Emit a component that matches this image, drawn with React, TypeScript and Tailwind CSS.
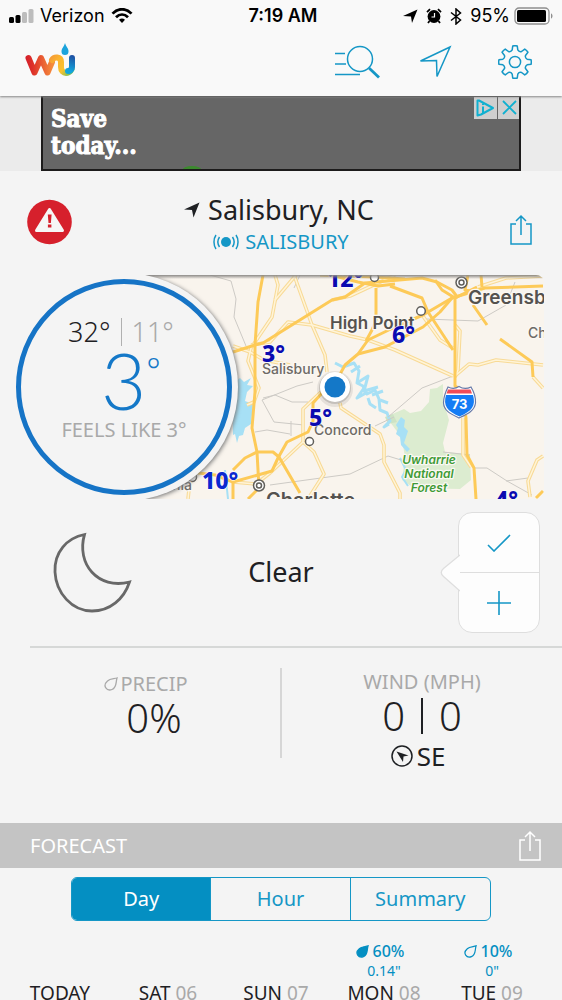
import React from "react";

const gearPath = (() => {
  const pt = (r: number, deg: number) => {
    const a = (deg * Math.PI) / 180;
    return `${(17 + r * Math.cos(a)).toFixed(2)} ${(17 + r * Math.sin(a)).toFixed(2)}`;
  };
  let d = "";
  for (let k = 0; k < 8; k++) {
    const a = k * 45 - 90;
    d += `${k === 0 ? "M" : "L"}${pt(12.4, a - 13)} L${pt(16.2, a - 8)} Q${pt(16.6, a)} ${pt(16.2, a + 8)} L${pt(12.4, a + 13)} Q${pt(10.6, a + 22.5)} ${pt(12.4, a + 32)} `;
  }
  return d + "Z";
})();

function StatusBar() {
  return (
    <div className="grid h-8 grid-cols-3 items-center pl-2 pr-2 font-['Inter',sans-serif] text-lg text-black">
      <div className="flex items-center gap-1.5">
        <svg width="26" height="16" viewBox="0 0 26 16" aria-label="Signal">
          <rect x="1" y="9" width="5" height="6" rx="1.5" fill="#000" />
          <rect x="7.500" y="7" width="5" height="8" rx="1.500" fill="#000" />
          <rect x="14" y="4" width="5" height="11" rx="1.500" fill="#bdbdbd" />
          <rect x="20.500" y="1" width="5" height="14" rx="1.500" fill="#bdbdbd" />
        </svg>
        <span>Verizon</span>
        <svg width="22" height="16" viewBox="0 0 22 16" fill="none" stroke="#000" strokeWidth="2.800" aria-label="Wi-Fi">
          <path d="M1.500 5.600C7-.2 15-.2 20.500 5.600" />
          <path d="M5 9.300c3.600-3.500 8.400-3.500 12 0" />
          <path d="M8 11.800c2-1.600 4-1.600 6 0L11 15Z" fill="#000" stroke="none" />
        </svg>
      </div>
      <span className="pl-1 text-center font-semibold">7:19 AM</span>
      <div className="flex items-center justify-end gap-2">
        <svg width="15" height="15" viewBox="0 0 15 15" aria-label="Location">
          <path d="M14.500.5 9 14 8 7.400 0 7Z" fill="#000" />
        </svg>
        <svg width="16" height="16" viewBox="0 0 16 16" aria-label="Alarm">
          <circle cx="8" cy="8.500" r="6.400" fill="#000" />
          <path d="M1 4.200 4 1.200M15 4.200 12 1.200M3.500 13 2 15M12.500 13 14 15" stroke="#000" strokeWidth="1.800" />
          <path d="M8.500 5v4H5.500" stroke="#fff" strokeWidth="1.200" fill="none" />
        </svg>
        <svg width="12" height="17" viewBox="0 0 12 17" fill="none" stroke="#000" strokeWidth="1.500" aria-label="Bluetooth">
          <path d="M1 4.500 10.500 12 6 16V1l4.500 4L1 12.500" />
        </svg>
        <span>95%</span>
        <svg width="40" height="18" viewBox="0 0 40 18" className="-ml-1" aria-label="Battery">
          <rect x="1" y="1" width="34" height="16" rx="4" fill="none" stroke="#8f8f8f" strokeWidth="1.300" />
          <rect x="3" y="3" width="29" height="12" rx="1.500" fill="#000" />
          <path d="M37 6.500c2 .6 2 4.400 0 5Z" fill="#8f8f8f" />
        </svg>
      </div>
    </div>
  );
}

function Logo() {
  return (
    <svg width="52" height="36" viewBox="0 0 52 36" aria-label="WU">
      <defs>
        <linearGradient id="w" gradientUnits="userSpaceOnUse" x1="2" y1="0" x2="28" y2="0">
          <stop offset="0" stopColor="#d4202c" />
          <stop offset=".25" stopColor="#dd3029" />
          <stop offset="1" stopColor="#f58a3c" />
        </linearGradient>
        <linearGradient id="y" gradientUnits="userSpaceOnUse" x1="26" y1="14" x2="48" y2="30">
          <stop offset="0" stopColor="#f59a37" />
          <stop offset=".3" stopColor="#fbb42f" />
          <stop offset=".65" stopColor="#f9c22f" />
          <stop offset="1" stopColor="#6fbf5a" />
        </linearGradient>
        <linearGradient id="b" gradientUnits="userSpaceOnUse" x1="48" y1="12" x2="43" y2="28">
          <stop offset="0" stopColor="#1f4ea1" />
          <stop offset=".95" stopColor="#12a5dc" />
        </linearGradient>
      </defs>
      <g fill="none" strokeWidth="6" strokeLinecap="round" strokeLinejoin="round">
        <path d="M4.500 15 10.500 29.500 17 15 23.500 29.500 28 19" stroke="url(#w)" />
        <path d="M28 17c2-3.500 9-4 9 2v5c0 4 2.500 6 5 6 4 0 6-3 6-7" stroke="url(#y)" />
        <path d="M48 15v9c0 2.500-2 4-4 4" stroke="url(#b)" />
      </g>
      <path d="M41 0c1 4 3.500 5 3.500 8.500a3.500 3.500 0 0 1-7 0C37.500 5 40 4 41 0Z" fill="#1ba3dc" />
    </svg>
  );
}

function TopNav() {
  return (
    <div className="flex h-16 items-start justify-between pt-[11px] pl-6 pr-[30px]">
      <a href="#home" aria-label="Home">
        <Logo />
      </a>
      <div className="flex items-center gap-9 pt-0.5 text-[#1597c6]">
        <button aria-label="Search">
          <svg width="50" height="34" viewBox="0 0 50 34" fill="none" stroke="currentColor" strokeWidth="1.500">
            <circle cx="28" cy="14" r="12.500" />
            <path d="M3 8.500h10M3 19h11M3 29.500h25" />
            <path d="m37 23 10 9.500" strokeWidth="2.800" />
          </svg>
        </button>
        <button aria-label="My location">
          <svg width="34" height="34" viewBox="0 0 34 34" fill="none" stroke="currentColor" strokeWidth="1.500">
            <path d="M32 2 2.500 16 18.500 15.500 19 31.500Z" />
          </svg>
        </button>
        <button aria-label="Settings" className="ml-2.5">
          <svg width="34" height="34" viewBox="0 0 34 34" fill="none" stroke="currentColor" strokeWidth="1.500" strokeLinejoin="round">
            <path d={gearPath} />
            <circle cx="17" cy="17" r="5.600" />
          </svg>
        </button>
      </div>
    </div>
  );
}

function Ad() {
  return (
    <aside className="flex justify-center bg-[#ebebeb]">
      <div className="flex h-[75px] w-[480px] max-w-full justify-between overflow-hidden border-2 border-t border-[#1c1b1b] bg-[#666]">
        <p className="pl-2 pt-2 font-['DejaVu_Serif_Condensed','DejaVu_Serif',serif] text-2xl leading-[27px] font-bold text-white [-webkit-text-stroke:1px_white]">
          Save
          <br />
          today...
        </p>
        <svg width="22" height="4" viewBox="0 0 22 4" className="mr-auto ml-11 self-end">
          <ellipse cx="11" cy="4" rx="9" ry="3" fill="#3c8a2e" />
        </svg>
        <div className="-mr-0.5 flex h-[22px] gap-px text-[#10b0d0]">
          <button aria-label="Ad choices" className="bg-[#cfcfcf]">
            <svg width="23" height="22" viewBox="0 0 23 22" fill="none" stroke="currentColor" strokeWidth="2">
              <path d="M3.500 3.500v15l3.500-1 12-6.500L5 3.500Z" strokeLinejoin="round" />
              <path d="M9 9.500v7M9 6.500v1.500" />
            </svg>
          </button>
          <button aria-label="Close ad" className="bg-[#cfcfcf]">
            <svg width="23" height="22" viewBox="0 0 23 22" fill="none" stroke="currentColor" strokeWidth="1.800">
              <path d="m5 4 13 13M18 4 5 17" />
            </svg>
          </button>
        </div>
      </div>
    </aside>
  );
}

function ShareIcon() {
  return (
    <svg width="24" height="32" viewBox="0 0 24 32" fill="none" stroke="currentColor" strokeWidth="1.500">
      <path d="M7 10H2v20h20V10h-5M12 21V2.500M7 7l5-5 5 5" />
    </svg>
  );
}

function Place() {
  return (
    <section className="grid h-[104px] grid-cols-[60px_1fr_60px] items-start px-[27px] pt-[21px]">
      <button aria-label="Severe alert" className="mt-[7px] w-fit">
        <svg width="45" height="46" viewBox="0 0 45 46">
          <circle cx="22.500" cy="23" r="22.300" fill="#d6202c" />
          <path d="M22.500 10.500 35.500 31.500h-26Z" fill="#f6f6f6" stroke="#f6f6f6" strokeWidth="3" strokeLinejoin="round" />
          <path d="M20.800 15.500h3.800l-.7 8.500h-2.400ZM20.900 25.500h3.500V28.500h-3.500Z" fill="#d6202c" />
        </svg>
      </button>
      <div className="flex flex-col items-center">
        <h1 className="flex items-center gap-2 pr-1 text-[27px] leading-9 whitespace-nowrap text-[#1e2023]">
          <svg width="16" height="16" viewBox="0 0 16 16">
            <path d="M15.500.5 9.500 15.500 8 8 0 7.500Z" fill="currentColor" />
          </svg>
          Salisbury, NC
        </h1>
        <a href="#station" className="flex items-center gap-1.5 text-xl leading-7 text-[#1597c6]">
          <svg width="26" height="16" viewBox="0 0 26 16" fill="none" stroke="currentColor" strokeWidth="1.500">
            <circle cx="13" cy="8" r="5" fill="currentColor" stroke="none" />
            <path d="M6.500 3c-2 3-2 7 0 10M3 1C.3 5 .3 11 3 15M19.500 3c2 3 2 7 0 10M23 1c2.700 4 2.700 10 0 14" />
          </svg>
          SALISBURY
        </a>
      </div>
      <button aria-label="Share conditions" className="mt-[22px] mr-0.5 justify-self-end text-[#1597c6]">
        <ShareIcon />
      </button>
    </section>
  );
}

const minorRoads = [
  "M275 275 278 285 272 317 251 348 248 361 259 388 254 402 247 405",
  "M294 275 312 325 325 355 327 372",
  "M251 345 270 342 288 322 312 325 350 336 368 340 395 350 453 376",
  "M233 346 250 352 264 360 290 365",
  "M321 392 303 409 303 442 314 452 324 474 308 499",
  "M303 442 270 473 256 484 233 482",
  "M340 403 341 408 380 434 384 445 384 462 400 493 400 499",
  "M296 275 275 300",
  "M455 376 469 364 478 365 496 360 543 365",
  "M455 325 460 331 458 370 455 377",
  "M533 377 543 388",
  "M463 418 463 455 471 467",
  "M543 456 537 460 528 481 530 497",
  "M395 275 350 296 332 300",
  "M420 312 440 340 453 348",
  "M478 287 506 278 543 276",
  "M190 480 188 499",
];

const majorRoads = [
  "M263 275 258 302 255 345 255 392 252 428 257 452 259 488 248 499",
  "M233 352 255 345 263 343 332 300 345 297 365 283 422 278 437 282 452 290 458 298",
  "M327 274 358 282 378 286 395 284",
  "M320 275 375 277 405 279",
  "M390 286 422 298 428 312 453 350",
  "M435 280 442 290 455 298 477 287",
  "M233 482 272 471 278 458 287 442 308 432 313 421 313 403 322 393 338 378 345 365 358 354 368 340 395 327 423 315 452 298 485 288 543 286",
  "M358 354 385 347 423 327 440 312 452 298",
  "M376 288 376 320 372 330 366 341",
  "M455 298 455 340 455 386 462 390 466 418 467 455 474 468 476 499",
  "M473 305 487 325M500 339 532 362 533 377",
  "M233 470 245 458 257 452 273 452 279 457 300 493",
  "M233 482 233 499",
  "M468 275 465 290 481 293",
  "M481 275 482 287",
  "M190 472 215 475 233 482",
  "M536 498 543 491",
];

function MapView() {
  return (
    <a
      href="#map"
      aria-label="Open map"
      className="relative col-start-1 row-start-1 ml-[108px] block h-56 overflow-hidden rounded-r-lg bg-[#f9f4ed]"
    >
      <svg className="h-full w-full" viewBox="124 275 420 224" preserveAspectRatio="xMinYMin slice">
        <path
          d="M443 384 437 388 430 389 429 402 421 411 410 413 404 409 390 415 390 422 402 438 405 458 402 480 414 488 460 489 471 480 470 454 445 452 443 443 449 420 443 400Z"
          fill="#dcecd0"
        />
        <path d="M385 417 393 414 397 422 388 424Z" fill="#cde3c4" />
        <g fill="#a7e0f5">
          <path d="m240 378 4 4 7-4-4 7 6 1-6 6-2 9 8 3-2 20-6 4-2 7-4 1-2 7-2-9-2 1-1-40 4-4-3-8Z" />
          <path d="m396 425 5-8 4 3-1 7 4 4-4 12 6 6-3 3-6-7-1-8-4-3 2-6Z" />
        </g>
        <g fill="none" stroke="#a7e0f5" strokeWidth="2" strokeLinejoin="round">
          <path d="m335 363 8 4 11-4 5 8-2 12 6 3 4 8 8-4 4 9 1 11 7 3 3 8-6 6 5-3" strokeWidth="3" />
          <path d="M351 372 360 366M357 383 368 376 364 391 378 387M366 393 357 398 364 388M372 395 383 391M376 408 370 404 368 398M380 400 388 403" strokeWidth="3" />
          <path d="M400 458 406 470 402 477 408 486M225 470 228 499" />
        </g>
        <g fill="none" stroke="#cdcac5" strokeWidth="1">
          <path d="M210 275 231 281 236 299 234 317 246 346M313 382 297 386 262 400 274 422 304 425M263 398 275 395 292 402 308 402M255 432 267 430 290 434M291 421V436" />
          <path d="M270 485 350 474 388 456 401 460M375 426 394 417M388 417 422 388 453 376M426 319 478 321 506 305 515 282M300 275 294 288M474 468 487 468 507 481 532 495M506 481 528 478M443 452 470 455" />
        </g>
        <g fill="none" stroke="#f8da96" strokeWidth="3.600" strokeLinejoin="round">
          {minorRoads.map((d) => (
            <path key={d} d={d} />
          ))}
        </g>
        <g fill="none" stroke="#fff4d8" strokeWidth="1.500" strokeLinejoin="round">
          {minorRoads.map((d) => (
            <path key={d} d={d} />
          ))}
        </g>
        <g fill="none" stroke="#fdca58" strokeWidth="3" strokeLinejoin="round">
          {majorRoads.map((d) => (
            <path key={d} d={d} />
          ))}
        </g>
        <g fill="#fff" stroke="#615f5b" strokeWidth="1.500">
          <circle cx="374.500" cy="277.500" r="4" />
          <circle cx="421" cy="311" r="4.300" />
          <circle cx="309.500" cy="441.500" r="4" />
          <circle cx="461.500" cy="282.500" r="5.500" />
          <circle cx="461.500" cy="282.500" r="2.500" />
          <circle cx="259" cy="485.500" r="5.500" />
          <circle cx="259" cy="485.500" r="2.500" />
          <circle cx="192" cy="477" r="4.500" />
        </g>
        <g
          className="font-['Inter',sans-serif]"
          fill="#6e6a66"
          stroke="#fbf8f3"
          strokeWidth="2.500"
          strokeLinejoin="round"
          paintOrder="stroke"
          fontSize="14"
          fontWeight="500"
        >
          <text x="262" y="374">Salisbury</text>
          <text x="314" y="435">Concord</text>
          <text x="528" y="338">Ch</text>
          <text x="172" y="490">nia</text>
          <g fill="#55524f" fontWeight="600">
            <text x="330" y="329" fontSize="17">High Point</text>
            <text x="468" y="304" fontSize="19">Greensb</text>
            <text x="266" y="507" fontSize="20">Charlotte</text>
          </g>
          <g fill="#3f9b36" fontStyle="italic" fontWeight="600" fontSize="12" textAnchor="middle">
            <text x="429" y="464">Uwharrie</text>
            <text x="429" y="478">National</text>
            <text x="429" y="492">Forest</text>
          </g>
        </g>
        <path
          d="M448 387c4 2 7 2 11-.5 4 2.500 8 2.500 12 .5 3 5 5 9 4.500 16-1 8-8 11-16.500 15-8-4-15-7-15.500-15 0-7 2-11 4.500-16Z"
          fill="#fff"
          stroke="#6779a8"
          strokeWidth="1.200"
        />
        <path d="M448 389.500h22.500l1.500 4h-25.500Z" fill="#f14b58" />
        <path d="M446 395h27c3 11-1 16-13.500 21.500C447 411 443 406 446 395Z" fill="#147cf5" />
        <text x="459.500" y="409" textAnchor="middle" fill="#fff" fontSize="13" fontWeight="700" className="font-['Inter',sans-serif]">
          73
        </text>
        <g fill="#0a0ab0" fontSize="23" fontWeight="800" stroke="#fff" strokeWidth="1" paintOrder="stroke" className="font-['Noto_Sans',sans-serif]">
          <text x="327" y="287">12°</text>
          <text x="262" y="362">3°</text>
          <text x="392" y="343">6°</text>
          <text x="309" y="426">5°</text>
          <text x="202" y="489" fill="#0a28d0">10°</text>
          <text x="495" y="508">4°</text>
        </g>
        <circle cx="335" cy="389" r="18" fill="#000" opacity=".08" />
        <circle cx="335" cy="388" r="16" fill="#000" opacity=".14" />
        <circle cx="335" cy="387" r="15" fill="#fff" />
        <circle cx="335" cy="387" r="10.500" fill="#1478c8" />
      </svg>
      <div className="absolute inset-x-0 top-0 h-1 bg-linear-to-b from-[#8c8a87] to-transparent" />
      <div className="absolute top-1/2 left-0 size-[228px] -translate-1/2 rounded-full bg-[#f4f4f4] shadow-[1px_1px_4px_#777]" />
    </a>
  );
}

function Current() {
  return (
    <section className="grid items-center pl-4 pr-[18px]">
      <MapView />
      <div className="z-10 col-start-1 row-start-1 flex size-[216px] flex-col items-center rounded-full border-[5px] border-[#1674c6] bg-[#f4f4f4] pt-[30px]">
        <div className="flex items-center gap-2.5 pr-1.5 text-[27px] leading-9">
          <span className="font-light text-[#1e2023]">32°</span>
          <span className="h-7 w-px bg-[#b0b0b0]" />
          <span className="font-light text-[#a9a9a9]">11°</span>
        </div>
        <div className="flex pl-3.5 leading-[60px] text-[#1478c8]">
          <span className="font-['Lato',sans-serif] text-[78px] font-light">3</span>
          <span className="text-[34px] leading-10 font-light">°</span>
        </div>
        <p className="mt-1.5 text-xl leading-7 text-[#a9a9a9]">FEELS LIKE 3°</p>
      </div>
    </section>
  );
}

function Condition() {
  return (
    <section>
      <div className="grid h-[147px] grid-cols-3 items-center pl-[52px] pr-5">
        <svg width="80" height="82" viewBox="0 0 80 82" fill="none" stroke="#686868" strokeWidth="2.800">
          <path d="M32.500 2.500C24 32 46 58 77.500 50 72 67 58 79 40 79 20 79 4 61 3 40 2 20 15 6 32.500 2.500Z" />
        </svg>
        <p className="pr-8 text-center text-[27px] text-[#1e2023]">Clear</p>
        <div className="relative mr-0.5 h-[121px] w-[82px] justify-self-end rounded-[14px] border border-[#dedede] bg-[#fdfdfd]">
          <svg width="20" height="38" viewBox="0 0 20 38" className="absolute top-[41px] -left-[19px]">
            <path d="M20 1 3.500 14.500c-3 2.500-3 5.500 0 8L20 37" fill="#fdfdfd" stroke="#dedede" strokeWidth="1.300" />
          </svg>
          <button aria-label="Confirm condition" className="flex h-[60px] w-full items-center justify-center border-b border-[#dedede]">
            <svg width="24" height="18" viewBox="0 0 24 18" fill="none" stroke="#1597c6" strokeWidth="1.600">
              <path d="m1 11 6 6L23 1" />
            </svg>
          </button>
          <button aria-label="Report condition" className="flex h-[59px] w-full items-center justify-center">
            <svg width="24" height="24" viewBox="0 0 24 24" fill="none" stroke="#1597c6" strokeWidth="1.600">
              <path d="M12 0v24M0 12h24" />
            </svg>
          </button>
        </div>
      </div>
      <hr className="ml-[30px] border-t-2 border-[#d6d8d7]" />
    </section>
  );
}

function Drop({ filled = false, size = 14 }: { filled?: boolean; size?: number }) {
  return (
    <svg width={size} height={size} viewBox="0 0 14 14" fill={filled ? "currentColor" : "none"} stroke="currentColor" strokeWidth="1.300">
      <path d="M13 1C10 2 6 1.500 3.500 4-2 9 3 14.500 8 12.500 13 10.500 11.500 6 13 1Z" />
    </svg>
  );
}

function Stats() {
  return (
    <section className="mt-5 mb-[65px] grid h-[90px] grid-cols-[1fr_2px_1fr] text-center text-[#1e2023]">
      <div className="flex flex-col items-center pl-7">
        <h2 className="mt-0.5 mr-4 flex items-center gap-0.5 text-xl leading-7 text-[#a9a9a9]">
          <Drop />
          PRECIP
        </h2>
        <p className="text-[40px] leading-10 font-light">0%</p>
      </div>
      <div className="h-[90px] bg-[#d6d6d6]" />
      <div className="flex flex-col items-center">
        <h2 className="text-xl leading-7 text-[#a9a9a9]">WIND (MPH)</h2>
        <p className="flex items-center gap-4 text-[40px] leading-10 font-light">
          <span>0</span>
          <span className="h-9 w-0.5 bg-[#1e2023]" />
          <span>0</span>
        </p>
        <p className="flex items-center gap-1 pr-2 text-[26px] leading-10">
          <svg width="22" height="22" viewBox="0 0 22 22">
            <circle cx="11" cy="11" r="10" fill="none" stroke="currentColor" strokeWidth="1.500" />
            <path d="m5.500 6.500 12 4-5 1-.5 5.500Z" fill="currentColor" />
          </svg>
          SE
        </p>
      </div>
    </section>
  );
}

const days = [
  { name: "TODAY" },
  { name: "SAT", date: "06" },
  { name: "SUN", date: "07" },
  { name: "MON", date: "08", chance: "60%", amount: '0.14"', filled: true },
  { name: "TUE", date: "09", chance: "10%", amount: '0"', filled: false },
];

function Forecast() {
  return (
    <section>
      <header className="flex h-[45px] items-center justify-between bg-[#c4c4c4] pl-[30px] pr-5 text-white">
        <h2 className="text-xl">FORECAST</h2>
        <button aria-label="Share forecast">
          <ShareIcon />
        </button>
      </header>
      <div className="mx-[71px] mt-[9px] grid h-11 grid-cols-3 divide-x divide-[#1597c6] overflow-hidden rounded-md border border-[#1597c6] text-xl text-[#1597c6]">
        <button className="bg-[#048fc2] text-white">Day</button>
        <button>Hour</button>
        <button>Summary</button>
      </div>
      <div className="mt-5 grid grid-cols-5 pl-1.5 pr-4 text-center">
        {days.map((day) => (
          <div key={day.name} className="flex flex-col items-center">
            <div className="h-10 text-sm leading-5 text-[#048fc2]">
              {day.chance && (
                <>
                  <p className="flex items-center gap-1 pr-2 text-base leading-5 font-medium">
                    <Drop filled={day.filled} size={13} />
                    {day.chance}
                  </p>
                  <p>{day.amount}</p>
                </>
              )}
            </div>
            <h3 className="text-[19px] leading-6 whitespace-nowrap text-[#1e2023]">
              {day.name} {day.date && <span className="text-[#a9a9a9]">{day.date}</span>}
            </h3>
          </div>
        ))}
      </div>
    </section>
  );
}

export default function App() {
  return (
    <div className="flex h-screen flex-col overflow-hidden bg-[#f4f4f4] font-['Noto_Sans',sans-serif]">
      <header className="z-20 shrink-0 bg-[#f9f9f9] shadow-[0_1px_2px_#888]">
        <StatusBar />
        <TopNav />
      </header>
      <main className="flex-1 overflow-hidden">
        <Ad />
        <Place />
        <Current />
        <Condition />
        <Stats />
        <Forecast />
      </main>
    </div>
  );
}
